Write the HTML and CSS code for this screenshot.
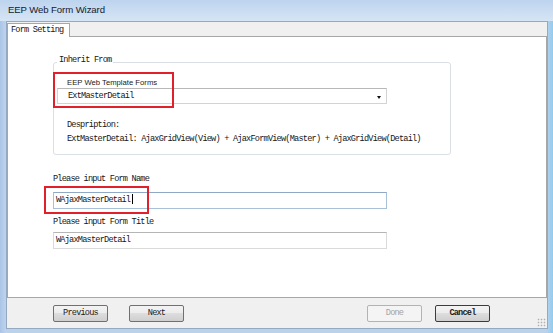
FILE: index.html
```html
<!DOCTYPE html>
<html lang="en">

<head>
  <meta charset="UTF-8" />
  <title>EEP Web Form Wizard</title>
  <link rel="stylesheet" href="styles.css">
</head>

<body>
  <div class="window">
    <div class="titlebar">EEP Web Form Wizard</div>

    <div class="client">
      <!-- tab strip -->
      <div class="tabs">
        <div class="tab">Form Setting</div>
      </div>

      <!-- tab page -->
      <div class="page">
        <fieldset class="group">
          <legend>Inherit From</legend>
          <div class="label sans">EEP Web Template Forms</div>
          <div class="combo">
            <span>ExtMasterDetail</span>
            <span class="arrow"></span>
          </div>
          <div class="label desc-title">Despription:</div>
          <div class="label desc">ExtMasterDetail: AjaxGridView(View) + AjaxFormView(Master) + AjaxGridView(Detail)</div>
        </fieldset>

        <div class="field">
          <div class="caption">Please input Form Name</div>
          <div class="textbox focused">WAjaxMasterDetail<span class="caret"></span></div>
        </div>
        <div class="field second">
          <div class="caption">Please input Form Title</div>
          <div class="textbox">WAjaxMasterDetail</div>
        </div>

        <!-- red annotation boxes -->
        <div class="mark mark-template"></div>
        <div class="mark mark-name"></div>
      </div>

      <!-- wizard buttons -->
      <div class="buttons">
        <button class="btn">Previous</button>
        <button class="btn next">Next</button>
        <button class="btn done" disabled>Done</button>
        <button class="btn cancel">Cancel</button>
        <div class="grip"></div>
      </div>
    </div>
  </div>
</body>

</html>
```

FILE: styles.css
```css
/* classic vista-ish dialog */
:root {
  --frame: #bcd2eb;
  --face: #f0f0f0;
  --line: #a7a7a7;
  --text: #161616;
  --mono: "Liberation Mono", "DejaVu Sans Mono", monospace;
  --red: #e0212b;
}
* {
  box-sizing: border-box;
  margin: 0;
  padding: 0;
}
body {
  width: 553px;
  height: 333px;
  overflow: hidden;
  background: #fff;
  color: var(--text);
  font-family: var(--mono);
  font-size: 8.6px;
  letter-spacing: -0.79px;
}
.window {
  height: 333px;
  display: flex;
  flex-direction: column;
  background: linear-gradient(to right, #a9c5e6 0, var(--frame) 5px, var(--frame) 546px, #8fcdf0 100%);
  padding: 0 5px 4px 6px;
}
.titlebar {
  height: 21px;
  margin: 0 -5px 0 -6px;
  padding: 3px 0 0 8px;
  background: linear-gradient(#bdd4ee, #d6e5f5);
  font-family: "Liberation Sans", Arial, sans-serif;
  font-size: 9.6px;
  letter-spacing: -0.1px;
  line-height: 14px;
  color: #14202e;
}
/* client area */
.client {
  flex: 1;
  display: flex;
  flex-direction: column;
  background: var(--face);
  border: 1px solid #95a9c2;
}
.tabs {
  height: 14px;
  display: flex;
  align-items: flex-end;
}
.tab {
  position: relative;
  z-index: 1;
  width: 63px;
  height: 14px;
  margin-bottom: -1px;
  padding: 1px 0 0 3px;
  background: #fff;
  border: 1px solid var(--line);
  border-bottom: none;
  line-height: 11px;
}
.page {
  position: relative;
  height: 262px;
  background: #fff;
  border: 1px solid var(--line);
  padding: 18px 0 0 45px;
}
/* group box */
.group {
  width: 398px;
  border: 1px solid #d9dfe4;
  border-radius: 3px;
  padding: 9px 0 10px 3px;
}
.group legend {
  padding: 0 2px 4px 2px;
  line-height: 10px;
}
.label {
  margin-left: 10px;
  line-height: 10px;
}
.sans {
  font-family: "Liberation Sans", Arial, sans-serif;
  font-size: 7.7px;
  letter-spacing: 0;
  color: #222;
}
.combo {
  width: 330px;
  height: 16px;
  display: flex;
  align-items: center;
  justify-content: space-between;
  padding: 0 5px 0 10px;
  border: 1px solid #d3d3d3;
  border-top-color: #b8b8b8;
}
.arrow {
  width: 0;
  height: 0;
  margin-top: 2px;
  border-left: 2.5px solid transparent;
  border-right: 2.5px solid transparent;
  border-top: 3px solid #111;
}
.desc-title {
  margin-top: 16px;
}
.desc {
  margin-top: 4px;
}
/* text fields */
.field {
  margin-top: 19px;
}
.field.second {
  margin-top: 8px;
}
.caption {
  line-height: 10px;
}
.textbox {
  width: 334px;
  height: 17px;
  margin-top: 8px;
  padding-left: 2px;
  line-height: 15px;
  border: 1px solid #dadada;
  border-top-color: #b5b5b5;
}
.field.second .textbox {
  margin-top: 5px;
}
.textbox.focused {
  border-color: #a9c0d9;
  border-top-color: #8ea8c6;
}
.caret {
  display: inline-block;
  width: 0;
  height: 10px;
  margin-left: 2px;
  vertical-align: -2px;
  border-left: 1px solid #000;
}
/* annotation rectangles drawn over the form */
.mark {
  position: absolute;
  border: 2px solid var(--red);
}
.mark-template {
  left: 45px;
  top: 35px;
  width: 121px;
  height: 36px;
}
.mark-name {
  left: 36px;
  top: 149px;
  width: 105px;
  height: 28px;
}
/* button bar */
.buttons {
  flex: 1;
  display: flex;
  align-items: center;
  padding: 0 1px 0 46px;
}
.btn {
  width: 55px;
  height: 17px;
  font-family: var(--mono);
  font-size: 8.6px;
  letter-spacing: -0.79px;
  color: #1a1a1a;
  background: linear-gradient(#f3f3f3 0, #ececec 45%, #dddddd 50%, #cfcfcf 100%);
  border: 1px solid #707070;
  border-radius: 2px;
}
.next {
  margin-left: 21px;
}
.done {
  margin-left: auto;
  color: #a3a3a3;
  background: #f4f4f4;
  border-color: #b3b3b3;
}
.cancel {
  margin-left: 13px;
  font-weight: bold;
  border-color: #3c3c3c;
}
.grip {
  align-self: flex-end;
  width: 9px;
  height: 9px;
  margin: 0 0 1px 47px;
  background: radial-gradient(circle, #b0b0b0 0.7px, transparent 1.1px) 0 0 / 3px 3px;
}
```
